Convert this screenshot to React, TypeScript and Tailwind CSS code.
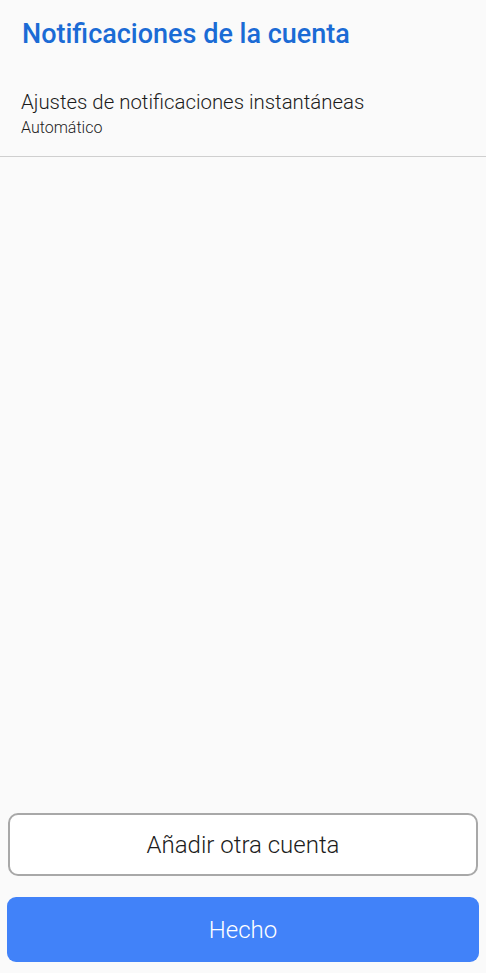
export default function App() {
  return (
    <div
      className="flex h-[973px] w-[486px] flex-col bg-[#fafafa]"
      style={{ fontFamily: "Roboto, 'Noto Sans', sans-serif" }}
    >
      <header className="px-[22px] pt-[16px]">
        <h1 className="text-[27px] font-medium leading-[36px] text-[#1b6bd5]">
          Notificaciones de la cuenta
        </h1>
      </header>

      <section className="mt-[37px] border-b border-[#cfcfcf] px-[21px] pb-[17px]">
        <p className="text-[20.4px] font-light leading-[26px] text-[#1c1c1c]">
          Ajustes de notificaciones instantáneas
        </p>
        <p className="mt-[2px] text-[16px] font-light leading-[22px] text-[#1c1c1c]">
          Automático
        </p>
      </section>

      <div className="flex-1" />

      <div className="flex flex-col gap-[21px] px-[7px] pb-[11px]">
        <button className="mx-[1px] flex h-[63px] items-center justify-center rounded-[10px] border-2 border-[#a8a8a8] bg-white text-[24px] font-light text-[#1c1c1c]">
          Añadir otra cuenta
        </button>
        <button className="flex h-[65px] items-center justify-center rounded-[9px] bg-[#4182f9] text-[24px] font-light text-white">
          Hecho
        </button>
      </div>
    </div>
  )
}
